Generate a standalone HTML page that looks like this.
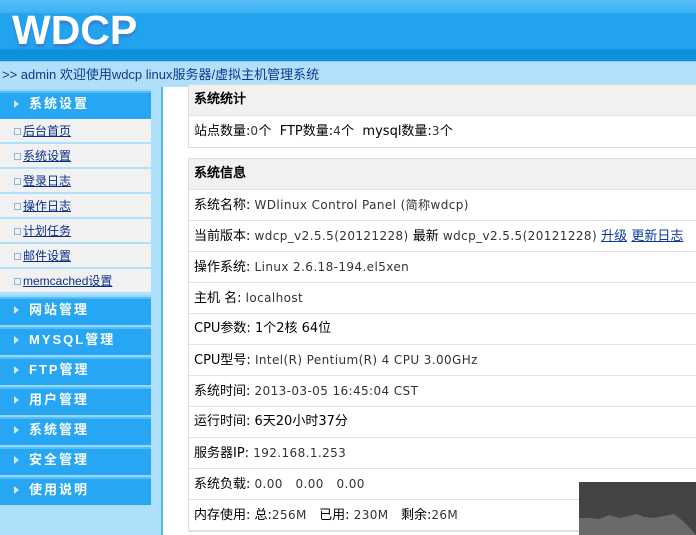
<!DOCTYPE html>
<html><head><meta charset="utf-8"><style>
*{margin:0;padding:0;box-sizing:border-box}
body{width:696px;height:535px;overflow:hidden;position:relative;background:#fff;font-family:"Liberation Sans","WenQuanYi Zen Hei","Noto Sans CJK SC",sans-serif;font-size:12px;color:#000}
#hd{position:absolute;left:0;top:0;width:696px;height:61px;background:linear-gradient(#52bdf7 0,#3fb2f4 12px,#22a3ee 14px,#22a3ee 48px,#0d8fdc 50px,#0d8fdc 61px)}
#logo{position:absolute;left:12px;top:7px;font:bold 41px "Liberation Sans",sans-serif;color:#fff;text-shadow:0 3px 2px #3a7fd0}
#bc{position:absolute;left:0;top:61px;width:696px;height:26px;background:#b2e0fb;border-top:1px solid #8cccf2;color:#0b3a8c;font-size:13px;line-height:25px;padding-left:2px}
#sb{position:absolute;left:0;top:87px;width:163px;height:448px;background:#afe0fb;border-right:2px solid #5fb6ec}
.mh{position:absolute;left:0;width:151px;height:30px;background:linear-gradient(#9ad6fa 0,#9ad6fa 2px,#52bff8 2px,#52bff8 4px,#27a6f3 4px);color:#fff;font-weight:bold;font-size:13px;letter-spacing:2px;line-height:30px;padding-left:29px}
.mh:before{content:"";position:absolute;left:14px;top:11px;border-left:5px solid #cfe9fb;border-top:4px solid transparent;border-bottom:4px solid transparent}
.it{position:absolute;left:0;width:151px;height:23px;background:#f1f1f1;line-height:24px;padding-left:23px;font-size:12px}
.it a{color:#0a2e8a;text-decoration:underline}
.it:before{content:"";position:absolute;left:14px;top:9px;width:5px;height:5px;border:1px solid #8ab8dc}
.box{position:absolute;left:188px;width:520px;border:1px solid #ddd;background:#fff;font-family:"DejaVu Sans","WenQuanYi Zen Hei",sans-serif}
.row{height:31px;border-bottom:1px solid #e2e2e2;line-height:30px;padding-left:5px;font-size:13px;white-space:nowrap}
.h{background:#f1f1f1;font-weight:bold;font-size:13px}
.v{color:#333;font-size:12px;letter-spacing:.4px}
.row a{color:#0a3aa0}
</style></head><body>
<div id="hd"><div id="logo">WDCP</div></div>
<div id="bc">&gt;&gt; admin 欢迎使用wdcp linux服务器/虚拟主机管理系统</div>
<div id="sb">
<div class="mh" style="top:2px">系统设置</div>
<div class="it" style="top:32px"><a>后台首页</a></div>
<div class="it" style="top:57px"><a>系统设置</a></div>
<div class="it" style="top:82px"><a>登录日志</a></div>
<div class="it" style="top:107px"><a>操作日志</a></div>
<div class="it" style="top:132px"><a>计划任务</a></div>
<div class="it" style="top:157px"><a>邮件设置</a></div>
<div class="it" style="top:182px"><a>memcached设置</a></div>
<div class="mh" style="top:208px">网站管理</div>
<div class="mh" style="top:238px">MYSQL管理</div>
<div class="mh" style="top:268px">FTP管理</div>
<div class="mh" style="top:298px">用户管理</div>
<div class="mh" style="top:328px">系统管理</div>
<div class="mh" style="top:358px">安全管理</div>
<div class="mh" style="top:388px">使用说明</div>
</div>
<div class="box" style="top:84px">
<div class="row h">系统统计</div>
<div class="row" style="border-bottom:none">站点数量:<span class="v">0</span>个 &nbsp;FTP数量:<span class="v">4</span>个 &nbsp;mysql数量:<span class="v">3</span>个</div>
</div>
<div class="box" style="top:158px">
<div class="row h">系统信息</div>
<div class="row">系统名称: <span class="v">WDlinux Control Panel (简称wdcp)</span></div>
<div class="row">当前版本: <span class="v">wdcp_v2.5.5(20121228)</span> 最新 <span class="v">wdcp_v2.5.5(20121228)</span> <a href="#">升级</a> <a href="#">更新日志</a></div>
<div class="row">操作系统: <span class="v">Linux 2.6.18-194.el5xen</span></div>
<div class="row">主机 名: <span class="v">localhost</span></div>
<div class="row">CPU参数: 1个2核 64位</div>
<div class="row">CPU型号: <span class="v">Intel(R) Pentium(R) 4 CPU 3.00GHz</span></div>
<div class="row">系统时间: <span class="v">2013-03-05 16:45:04 CST</span></div>
<div class="row">运行时间: 6天20小时37分</div>
<div class="row">服务器IP: <span class="v">192.168.1.253</span></div>
<div class="row">系统负载: <span class="v">0.00 &nbsp; 0.00 &nbsp; 0.00</span></div>
<div class="row">内存使用: 总:<span class="v">256M</span> &nbsp; 已用: <span class="v">230M</span> &nbsp; 剩余:<span class="v">26M</span></div>
</div>
<svg style="position:absolute;left:579px;top:482px" width="117" height="53"><rect width="117" height="53" fill="#444"/><path d="M0 36 L10 36 L20 37 L30 33 L40 36 L50 34 L57 32 L65 35 L75 36 L85 34 L95 32 L105 40 L117 53 L0 53Z" fill="#6a6a6a"/></svg>
</body></html>
